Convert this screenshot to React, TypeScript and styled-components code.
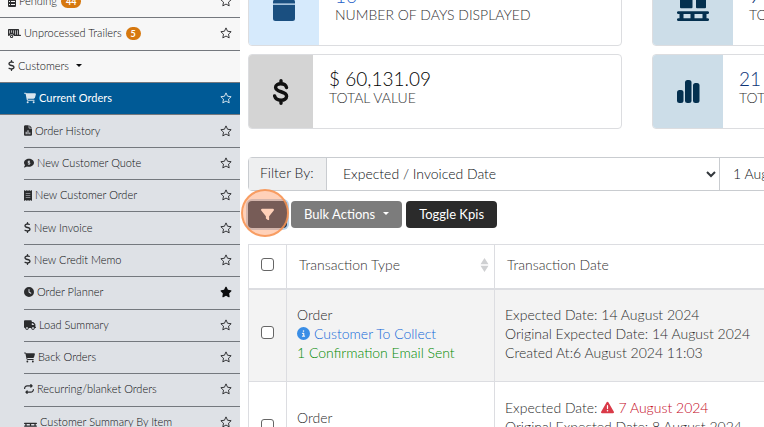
import React from 'react';
import styled, { createGlobalStyle, css } from 'styled-components';
import {
  FaCartShopping, FaCircleInfo, FaClock, FaCommentDollar, FaDollarSign, FaFilter,
  FaPallet, FaReceipt, FaRepeat, FaStar, FaTrailer, FaTriangleExclamation, FaTruck,
} from 'react-icons/fa6';

const GlobalStyle = createGlobalStyle`
  *, *::before, *::after { box-sizing: border-box; }
  html, body { margin: 0; height: 100%; overflow: hidden; background: #fff; }
  body, button, input, select { font-family: Lato, "Liberation Sans", sans-serif; font-weight: 300; }
  body { font-size: 14px; color: #2c2c2c; }
`;

const Page = styled.div`
  display: flex;
  height: 100vh;
  overflow: hidden;
`;

/* ---------- Sidebar ---------- */

const Sidebar = styled.nav`
  flex: 0 0 240px;
  margin-top: -14px;
  background: #f7f7f7;
`;

const TopMenu = styled.ul`
  display: grid;
  grid-template-rows: repeat(3, 1fr);
  height: 97px;
  margin: 0;
  padding: 0;
  list-style: none;
`;

const SubMenu = styled.ul`
  display: grid;
  grid-auto-rows: 1fr;
  height: 356px;
  margin: 0;
  padding: 0;
  list-style: none;
  background: #dee1e6;
`;

const MenuRow = styled.li<{ $active?: boolean; $nested?: boolean }>`
  display: flex;
  align-items: center;
  padding: 0 8px 1px;
  border-bottom: 1px solid #74787e;
  color: #0c0d0f;
  ${({ $nested }) =>
    $nested &&
    css`
      padding-left: 0;
      margin-left: 24px;
    `}
  ${({ $active }) =>
    $active &&
    css`
      margin-left: 0;
      padding-left: 24px;
      color: #fff;
      background: #005a96;
      font-weight: 400;
    `}
`;

const MenuLink = styled.a`
  display: flex;
  flex: 1;
  align-items: center;
  gap: 3px;
  color: inherit;
  font-size: 11px;
  line-height: 16px;
  text-decoration: none;
  white-space: nowrap;
  svg { flex: none; opacity: 0.85; }
`;

const Badge = styled.span`
  margin-left: 1px;
  padding: 0 5px;
  border-radius: 7px;
  background: #d6780f;
  color: #fff;
  font-size: 9px;
  font-weight: 700;
  line-height: 13px;
`;

const Caret = styled.span`
  margin-left: 4px;
  border: 3px solid transparent;
  border-top-color: currentColor;
  border-bottom-width: 0;
`;

const StarButton = styled.button`
  display: flex;
  padding: 0;
  border: 0;
  background: none;
  color: inherit;
`;

const DollarGlyph = styled(FaDollarSign)`
  width: 7px;
  height: 11px;
`;

const ReceiptGlyph = styled(FaReceipt)`
  width: 8px;
  height: 11px;
`;

/* ---------- KPI cards ---------- */

const Main = styled.main`
  flex: 1;
  min-width: 0;
  overflow: hidden;
  padding-left: 8px;
`;

const KpiGrid = styled.section`
  display: grid;
  grid-template-columns: repeat(2, minmax(374px, 1fr));
  gap: 8px 30px;
  margin-top: -29px;
`;

const KpiCard = styled.article`
  display: flex;
  height: 75px;
  overflow: hidden;
  border: 1px solid #dcdde0;
  border-radius: 4px;
`;

const KpiIcon = styled.div<{ $bg: string; $color: string; $width: number }>`
  display: flex;
  flex: 0 0 ${({ $width }) => $width}px;
  align-items: center;
  justify-content: center;
  background: ${({ $bg }) => $bg};
  color: ${({ $color }) => $color};
`;

const KpiText = styled.div`
  padding: 14px 16px;
  white-space: nowrap;
`;

const KpiValue = styled.div<{ $color: string }>`
  color: ${({ $color }) => $color};
  font-size: 19px;
  line-height: 20px;
`;

const KpiLabel = styled.div`
  color: #333;
  font-size: 14px;
  line-height: 18px;
`;

/* ---------- Filter and actions ---------- */

const FilterBar = styled.div`
  display: flex;
  width: 778px;
  height: 34px;
  margin-top: 28px;
  border: 1px solid #c9ccd0;
  border-radius: 4px;
`;

const FilterLabel = styled.label`
  flex: 0 0 78px;
  padding: 0 11px;
  border-right: 1px solid #c9ccd0;
  background: #eeeff0;
  color: #15181b;
  font-size: 14px;
  line-height: 30px;
  white-space: nowrap;
`;

const SelectWrap = styled.div`
  display: grid;
  flex: 0 0 393px;
  align-items: center;
  border-right: 1px solid #c9ccd0;
  > * { grid-area: 1 / 1; }
  svg { justify-self: end; margin-right: 3px; pointer-events: none; }
`;

const FilterSelect = styled.select`
  appearance: none;
  width: 100%;
  height: 32px;
  padding: 0 16px 2px;
  border: 0;
  background: transparent;
  color: #0c1014;
  font-size: 14px;
`;

const DateInput = styled.input`
  flex: 1;
  min-width: 0;
  padding: 0 13px 2px;
  border: 0;
  background: transparent;
  color: #0c1014;
  font-size: 14px;
`;

const Actions = styled.div`
  display: flex;
  gap: 4px;
  margin-top: 10px;
`;

const ActionButton = styled.button<{ $bg: string }>`
  display: flex;
  align-items: center;
  gap: 4px;
  height: 27px;
  padding: 0 13px 2px;
  border: 0;
  border-radius: 4px;
  background: ${({ $bg }) => $bg};
  color: #fff;
  font-size: 13px;
  font-weight: 400;
  white-space: nowrap;
`;

const FilterButton = styled(ActionButton)`
  position: relative;
  justify-content: center;
  width: 39px;
  padding: 0;
  box-shadow: 0 0 0 2px #b9d2ea;
`;

const ClickMarker = styled.span`
  position: absolute;
  top: 50%;
  left: 50%;
  width: 48px;
  height: 48px;
  margin: -26px 0 0 -27px;
  border: 2px solid rgba(247, 148, 84, 0.85);
  border-radius: 50%;
  background: rgba(255, 140, 80, 0.4);
`;

/* ---------- Table ---------- */

const OrdersTable = styled.table`
  width: 778px;
  margin-top: 16px;
  border-collapse: collapse;
  table-layout: fixed;
`;

const HeadCell = styled.th`
  height: 44px;
  padding: 0 12px 3px;
  border: 1px solid #dcdde1;
  border-bottom: 2px solid #dcdde1;
  color: #333;
  font-size: 14px;
  font-weight: 300;
  text-align: left;
`;

const HeadContent = styled.div`
  display: flex;
  align-items: center;
  justify-content: space-between;
  margin-right: -7px;
`;

const Row = styled.tr<{ $striped?: boolean }>`
  background: ${({ $striped }) => ($striped ? '#f3f3f3' : '#fff')};
`;

const Cell = styled.td`
  height: 93px;
  padding: 0 10px 3px;
  border: 1px solid #dcdde1;
  font-size: 14px;
  line-height: 19px;
  white-space: nowrap;
`;

const CheckCell = styled(Cell)`
  padding: 0 12px 5px;
`;

const Check = styled.input`
  display: block;
  appearance: none;
  width: 13px;
  height: 13px;
  margin: 0;
  border: 1px solid #666;
  border-radius: 3px;
  background: #fff;
`;

const Line = styled.div<{ $color?: string }>`
  display: flex;
  align-items: center;
  gap: 4px;
  color: ${({ $color }) => $color || 'inherit'};
`;

const InfoGlyph = styled(FaCircleInfo)`
  color: #3a8ee6;
`;

const Overdue = styled.span`
  display: inline-flex;
  align-items: center;
  gap: 4px;
  color: #c4081c;
  svg { color: #d93a48; }
`;

/* ---------- Drawings ---------- */

const StarOutline = () => (
  <svg width="12" height="12" viewBox="0 0 24 24" fill="none" stroke="currentColor" strokeWidth="1.6" strokeLinejoin="round">
    <path d="M12 1.800l3.100 6.700 7.200.9-5.300 5 1.400 7.300L12 18.100l-6.400 3.600L7 14.400l-5.300-5 7.200-.9z" />
  </svg>
);

const FileChart = () => (
  <svg width="8" height="11" viewBox="0 0 384 512" fill="currentColor">
    <path fillRule="evenodd" d="M64 0C29 0 0 29 0 64v384c0 35 29 64 64 64h256c35 0 64-29 64-64V160H256c-18 0-32-14-32-32V0zm192 0v128h128zM80 320h48v112H80zm88-80h48v192h-48zm88 112h48v80h-48z" />
  </svg>
);

const ListSheet = () => (
  <svg width="8" height="11" viewBox="0 0 8 11" fill="currentColor">
    <path fillRule="evenodd" d="M1 0h6q1 0 1 1v9q0 1-1 1H1q-1 0-1-1V1q0-1 1-1zm0 2v1h1V2zm2 0v1h4V2zM1 5v1h1V5zm2 0v1h4V5zM1 8v1h1V8zm2 0v1h4V8z" />
  </svg>
);

const CalendarIcon = () => (
  <svg width="22" height="24" viewBox="0 0 22 24" fill="currentColor">
    <path d="M0 6.500V5q0-2.500 2.500-2.500H5V0h3v2.500h6V0h3v2.500h2.500Q22 2.500 22 5v1.500zM0 7.800h22V21.500q0 2.500-2.500 2.500h-17Q0 24 0 21.500z" />
  </svg>
);

const PalletBoxes = () => (
  <svg width="32" height="24" viewBox="0 0 32 24" fill="currentColor">
    <rect x="3" y="0" width="12.500" height="11.300" rx="1" />
    <rect x="19" y="0" width="10" height="11.300" rx="1" />
    <path fillRule="evenodd" d="M1.300 14.300h29.400a1.300 1.300 0 0 1 0 2.700H29.500v4.300h1.200a1.300 1.300 0 0 1 0 2.700H1.300a1.300 1.300 0 0 1 0-2.700H2.500V17H1.300a1.300 1.300 0 0 1 0-2.700zM6.500 17v4.300h7V17zm11 0v4.300h8V17z" />
  </svg>
);

const BarsIcon = () => (
  <svg width="23" height="23" viewBox="0 0 23 23" fill="currentColor">
    <rect x="0" y="10" width="6.500" height="13" rx="2.500" />
    <rect x="8" y="0" width="6.500" height="23" rx="2.500" />
    <rect x="16" y="3" width="6.500" height="20" rx="2.500" />
  </svg>
);

const DollarIcon = () => (
  <svg width="16" height="26" viewBox="0 0 16 26" fill="none" stroke="currentColor" strokeWidth="3.400" strokeLinecap="round">
    <path d="M13.500 8.500C12.500 3.600 2.600 3.500 2.600 8.300c0 5.700 11 3.200 11 9 0 5.300-10.600 5.200-12-.3M8 1.800v3M8 21.200v3" />
  </svg>
);

const Chevron = () => (
  <svg width="10" height="7" viewBox="0 0 10 7" fill="none" stroke="#33373c" strokeWidth="2">
    <path d="M1 1l4 4 4-4" />
  </svg>
);

const SortIcon = () => (
  <svg width="9" height="14" viewBox="0 0 9 14" fill="#cfd0d2">
    <path d="M4.500 0L8.500 6.300H.5zM4.500 14L.5 7.700h8z" />
  </svg>
);

/* ---------- Content ---------- */

type Item = { icon: React.ReactNode; label: string; active?: boolean; starred?: boolean };

const items: Item[] = [
  { icon: <FaCartShopping size={12} />, label: 'Current Orders', active: true },
  { icon: <FileChart />, label: 'Order History' },
  { icon: <FaCommentDollar size={10} />, label: 'New Customer Quote' },
  { icon: <ReceiptGlyph />, label: 'New Customer Order' },
  { icon: <DollarGlyph />, label: 'New Invoice' },
  { icon: <DollarGlyph />, label: 'New Credit Memo' },
  { icon: <FaClock size={10} />, label: 'Order Planner', starred: true },
  { icon: <FaTruck size={12} />, label: 'Load Summary' },
  { icon: <FaCartShopping size={11} />, label: 'Back Orders' },
  { icon: <FaRepeat size={10} />, label: 'Recurring/blanket Orders' },
  { icon: <FaPallet size={13} />, label: 'Customer Summary By Item' },
];

const Favourite = ({ label, on }: { label: string; on?: boolean }) => (
  <StarButton type="button" aria-label={`Favourite ${label}`} aria-pressed={!!on}>
    {on ? <FaStar size={12} /> : <StarOutline />}
  </StarButton>
);

export default function App() {
  return (
    <Page>
      <GlobalStyle />
      <Sidebar>
        <TopMenu>
          <MenuRow>
            <MenuLink href="#pending"><ListSheet />Pending <Badge>44</Badge></MenuLink>
            <Favourite label="Pending" />
          </MenuRow>
          <MenuRow>
            <MenuLink href="#trailers"><FaTrailer size={13} />Unprocessed Trailers <Badge>5</Badge></MenuLink>
            <Favourite label="Unprocessed Trailers" />
          </MenuRow>
          <MenuRow>
            <MenuLink href="#customers"><DollarGlyph />Customers <Caret /></MenuLink>
          </MenuRow>
        </TopMenu>
        <SubMenu>
          {items.map((item) => (
            <MenuRow key={item.label} $nested $active={item.active}>
              <MenuLink href="#orders">{item.icon}{item.label}</MenuLink>
              <Favourite label={item.label} on={item.starred} />
            </MenuRow>
          ))}
        </SubMenu>
      </Sidebar>

      <Main>
        <KpiGrid>
          <KpiCard>
            <KpiIcon $bg="#d6eafc" $color="#1a4f80" $width={70}><CalendarIcon /></KpiIcon>
            <KpiText>
              <KpiValue $color="#1f5fc8">16</KpiValue>
              <KpiLabel>NUMBER OF DAYS DISPLAYED</KpiLabel>
            </KpiText>
          </KpiCard>
          <KpiCard>
            <KpiIcon $bg="#ccdde8" $color="#04304f" $width={80}><PalletBoxes /></KpiIcon>
            <KpiText>
              <KpiValue $color="#0c3475">9</KpiValue>
              <KpiLabel>TOTAL PALLETS</KpiLabel>
            </KpiText>
          </KpiCard>
          <KpiCard>
            <KpiIcon $bg="#d4d4d4" $color="#111" $width={64}><DollarIcon /></KpiIcon>
            <KpiText>
              <KpiValue $color="#000">$ 60,131.09</KpiValue>
              <KpiLabel>TOTAL VALUE</KpiLabel>
            </KpiText>
          </KpiCard>
          <KpiCard>
            <KpiIcon $bg="#ccdde8" $color="#04304f" $width={70}><BarsIcon /></KpiIcon>
            <KpiText>
              <KpiValue $color="#0c3475">21</KpiValue>
              <KpiLabel>TOTAL ORDERS</KpiLabel>
            </KpiText>
          </KpiCard>
        </KpiGrid>

        <FilterBar>
          <FilterLabel htmlFor="filter-by">Filter By:</FilterLabel>
          <SelectWrap>
            <FilterSelect id="filter-by">
              <option>Expected / Invoiced Date</option>
            </FilterSelect>
            <Chevron />
          </SelectWrap>
          <DateInput aria-label="Date range" defaultValue="1 August 2024" />
        </FilterBar>

        <Actions>
          <FilterButton type="button" $bg="#1d3c5c" aria-label="Filter">
            <FaFilter size={13} />
            <ClickMarker />
          </FilterButton>
          <ActionButton type="button" $bg="#7c7c7c">Bulk Actions <Caret /></ActionButton>
          <ActionButton type="button" $bg="#2b2b2b">Toggle Kpis</ActionButton>
        </Actions>

        <OrdersTable>
          <colgroup>
            <col style={{ width: 38 }} />
            <col style={{ width: 208 }} />
            <col />
          </colgroup>
          <thead>
            <tr>
              <HeadCell><Check type="checkbox" aria-label="Select all" /></HeadCell>
              <HeadCell><HeadContent>Transaction Type <SortIcon /></HeadContent></HeadCell>
              <HeadCell><HeadContent>Transaction Date <SortIcon /></HeadContent></HeadCell>
            </tr>
          </thead>
          <tbody>
            <Row $striped>
              <CheckCell><Check type="checkbox" aria-label="Select order 1" /></CheckCell>
              <Cell>
                <Line>Order</Line>
                <Line $color="#1068d8"><InfoGlyph size={13} />Customer To Collect</Line>
                <Line $color="#008a00">1 Confirmation Email Sent</Line>
              </Cell>
              <Cell>
                <Line>Expected Date: 14 August 2024</Line>
                <Line>Original Expected Date: 14 August 2024</Line>
                <Line>Created At:6 August 2024 11:03</Line>
              </Cell>
            </Row>
            <Row>
              <CheckCell><Check type="checkbox" aria-label="Select order 2" /></CheckCell>
              <Cell>
                <Line>Order</Line>
                <Line $color="#c4081c">No Confirmation Email Sent</Line>
              </Cell>
              <Cell>
                <Line>Expected Date: <Overdue><FaTriangleExclamation size={13} />7 August 2024</Overdue></Line>
                <Line>Original Expected Date: 8 August 2024</Line>
                <Line>Created At:6 August 2024 10:41</Line>
              </Cell>
            </Row>
          </tbody>
        </OrdersTable>
      </Main>
    </Page>
  );
}
